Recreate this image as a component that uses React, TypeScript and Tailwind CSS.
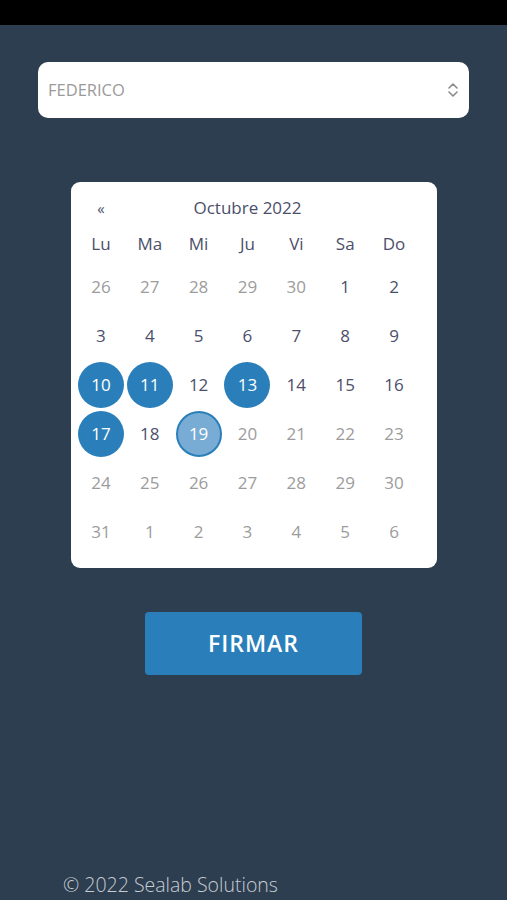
import { FC } from "react";

type Day = { n: number; muted?: boolean; picked?: boolean; today?: boolean };

const weekdays = ["Lu", "Ma", "Mi", "Ju", "Vi", "Sa", "Do"];

const weeks: Day[][] = [
  [26, 27, 28, 29, 30].map((n) => ({ n, muted: true })).concat([{ n: 1 }, { n: 2 }]),
  [3, 4, 5, 6, 7, 8, 9].map((n) => ({ n })),
  [
    { n: 10, picked: true },
    { n: 11, picked: true },
    { n: 12 },
    { n: 13, picked: true },
    { n: 14 },
    { n: 15 },
    { n: 16 },
  ],
  [
    { n: 17, picked: true },
    { n: 18 },
    { n: 19, today: true },
    ...[20, 21, 22, 23].map((n) => ({ n, muted: true })),
  ],
  [24, 25, 26, 27, 28, 29, 30].map((n) => ({ n, muted: true })),
  [31, 1, 2, 3, 4, 5, 6].map((n) => ({ n, muted: true })),
];

const DayCell: FC<{ day: Day }> = ({ day }) => {
  let cls = "text-[#4b4f6b]";
  if (day.muted) cls = "text-[#9c9c9c]";
  if (day.picked) cls = "bg-[#2a7fba] text-white";
  if (day.today) cls = "bg-[#79acd5] text-white border-2 border-[#2a7fba]";
  return (
    <div className="flex h-[49px] items-center justify-center">
      <span className={`flex h-[46px] w-[46px] items-center justify-center rounded-full text-[17px] ${cls}`}>
        {day.n}
      </span>
    </div>
  );
};

const Calendar: FC = () => (
  <div className="mx-auto mt-[64px] w-[366px] rounded-[9px] bg-white pb-[12px] pl-[6px] pt-[8px]">
    <div className="w-[342px]">
      <div className="relative flex h-[36px] items-center justify-center text-[17px] text-[#4b4f6b]">
        <span className="absolute left-0 flex w-[49px] justify-center text-[15px]">«</span>
        <span>Octubre 2022</span>
      </div>
      <div className="grid h-[36px] grid-cols-7 items-center text-[17px] text-[#4b4f6b]">
        {weekdays.map((d) => (
          <span key={d} className="text-center">
            {d}
          </span>
        ))}
      </div>
      {weeks.map((w, i) => (
        <div key={i} className="grid grid-cols-7">
          {w.map((d, j) => (
            <DayCell key={j} day={d} />
          ))}
        </div>
      ))}
    </div>
  </div>
);

export default function App() {
  return (
    <div
      className="flex h-[900px] w-full flex-col overflow-hidden bg-[#2c3e50]"
      style={{ fontFamily: '"Open Sans", sans-serif' }}
    >
      <div className="h-[25px] flex-none bg-black" />
      <div className="mx-[38px] mt-[37px] flex h-[56px] items-center justify-between rounded-[10px] bg-white pl-[10px] pr-[10px]">
        <span className="text-[16.5px] text-[#9a9a9a]">FEDERICO</span>
        <svg width="12" height="16" viewBox="0 0 12 16" fill="none" stroke="#8a8a8a" strokeWidth="1.6" strokeLinecap="round" strokeLinejoin="round">
          <path d="M2 6l4-4 4 4" />
          <path d="M2 10l4 4 4-4" />
        </svg>
      </div>
      <Calendar />
      <button className="mx-auto mt-[44px] flex h-[63px] w-[217px] items-center justify-center rounded-[4px] bg-[#2a7fba] text-[23px] font-semibold tracking-[1px] text-white">
        FIRMAR
      </button>
      <div className="mt-auto pb-[2px] pl-[63px] text-[19.5px] font-light leading-[26px] text-[#c8cdd3]">
        © 2022 Sealab Solutions
      </div>
    </div>
  );
}
